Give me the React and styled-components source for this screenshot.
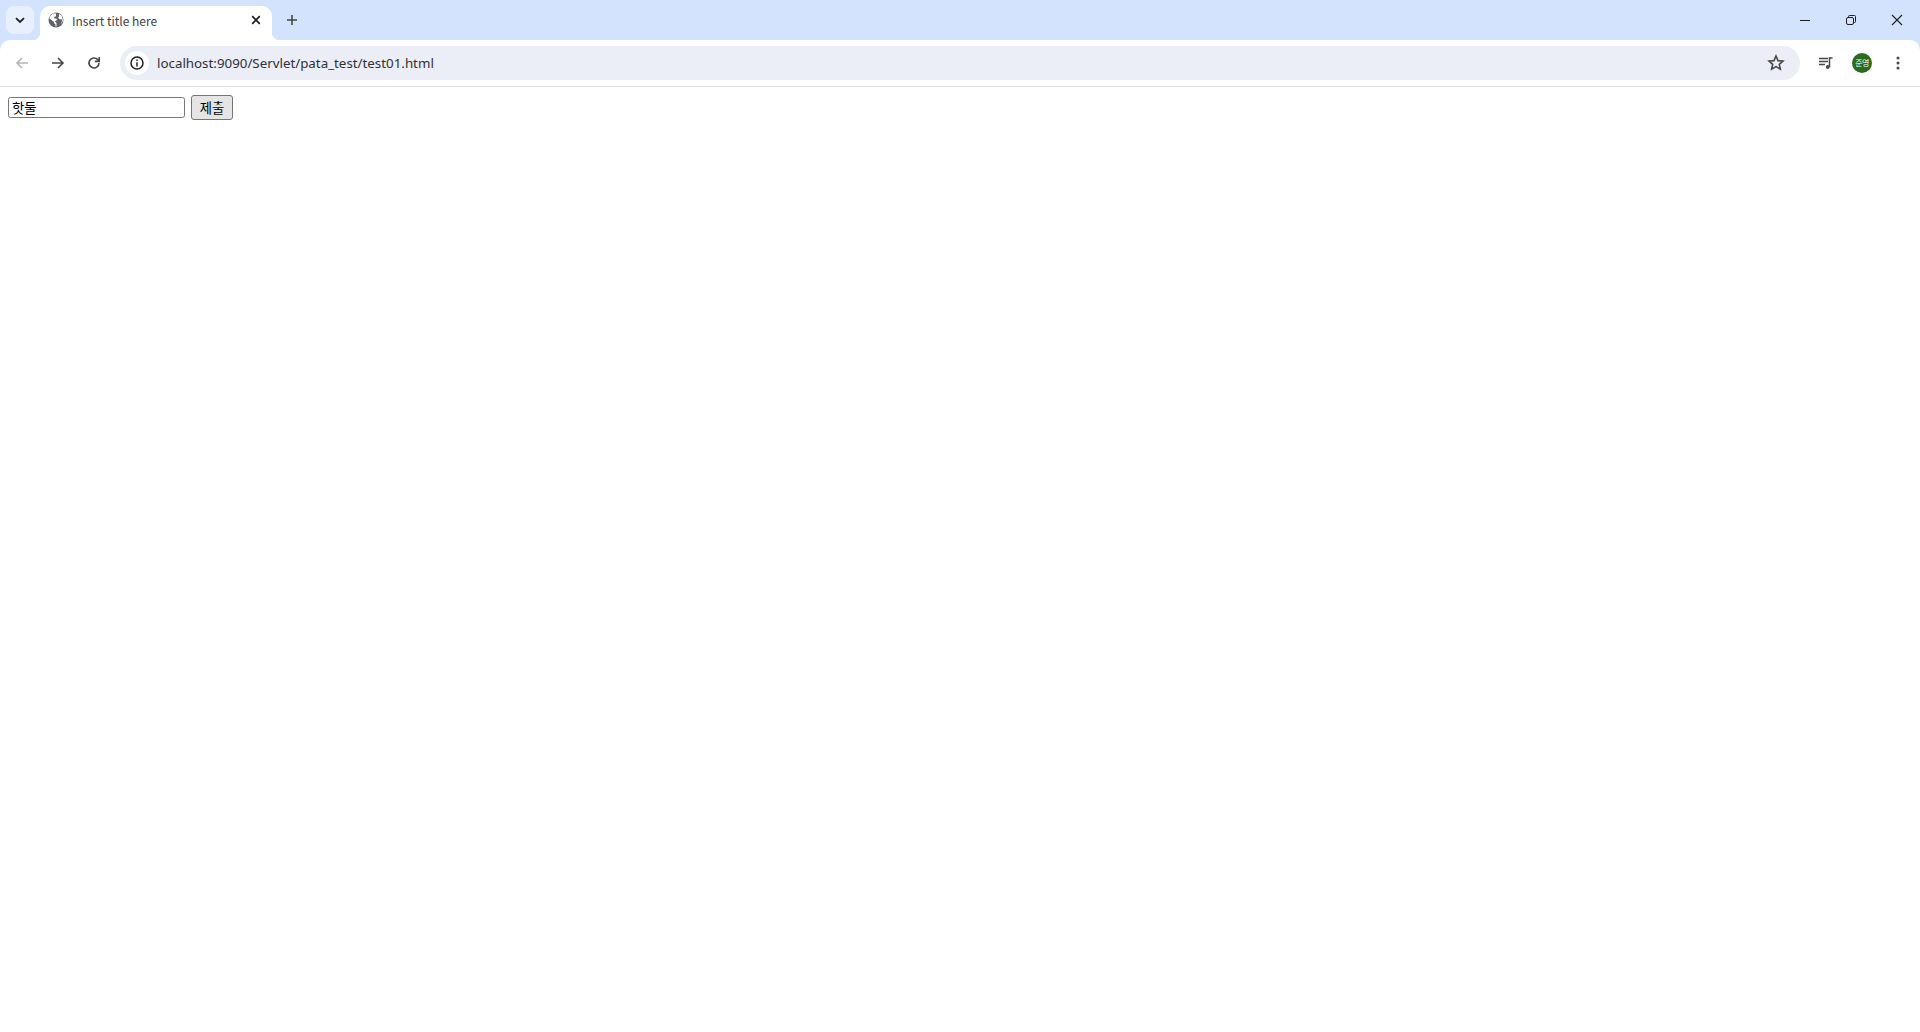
import React from "react";
import styled, { createGlobalStyle } from "styled-components";

const GlobalStyle = createGlobalStyle`
  html, body {
    margin: 0;
    padding: 0;
    background: #fff;
    height: 100%;
    overflow: hidden;
  }
`;

const Page = styled.div`
  width: 1920px;
  height: 1032px;
  display: flex;
  flex-direction: column;
  font-family: "Noto Sans CJK KR", "Liberation Sans", sans-serif;
`;

const BrowserFrame = styled.header`
  flex: none;
  background: #d3e3fd;
`;

const TabStrip = styled.div`
  height: 40px;
  display: flex;
  align-items: flex-start;
  padding-left: 6px;
`;

const TabSearch = styled.div`
  width: 28px;
  height: 28px;
  margin-top: 6px;
  border-radius: 8px;
  background: #e9f0fd;
  display: flex;
  align-items: center;
  justify-content: center;
`;

const Tab = styled.div`
  position: relative;
  width: 232px;
  height: 34px;
  margin: 6px 0 0 6px;
  background: #fff;
  border-radius: 10px 10px 0 0;
  display: flex;
  align-items: center;
  padding: 0 8px 6px 8px;
  box-sizing: border-box;

  &::before,
  &::after {
    content: "";
    position: absolute;
    bottom: 0;
    width: 8px;
    height: 8px;
    background: radial-gradient(circle at var(--cx) 0, #d3e3fd 8px, #fff 8.5px);
  }
  &::before {
    --cx: 0;
    left: -8px;
  }
  &::after {
    --cx: 100%;
    right: -8px;
  }
`;

const TabTitle = styled.span`
  flex: 1;
  margin: 2px 0 0 8px;
  font-family: "Noto Sans CJK KR", "Liberation Sans", sans-serif;
  font-size: 12px;
  line-height: 16px;
  color: #3c4043;
  white-space: nowrap;
`;

const NewTab = styled.div`
  width: 28px;
  height: 28px;
  margin: 6px 0 0 6px;
  display: flex;
  align-items: center;
  justify-content: center;
`;

const Spacer = styled.div`
  flex: 1;
`;

const WindowControls = styled.div`
  display: flex;
`;

const WindowButton = styled.div`
  width: 46px;
  height: 40px;
  display: flex;
  align-items: center;
  justify-content: center;
`;

const Toolbar = styled.div`
  height: 46px;
  background: #fff;
  border-bottom: 1px solid #dfe1e5;
  border-radius: 10px 10px 0 0;
  display: flex;
  align-items: center;
  padding: 0 4px;
`;

const NavButton = styled.div`
  width: 36px;
  height: 36px;
  display: flex;
  align-items: center;
  justify-content: center;
`;

const Omnibox = styled.div`
  width: 1680px;
  height: 34px;
  margin: 0 8px;
  background: #ebeef7;
  border-radius: 17px;
  display: flex;
  align-items: center;
  padding: 0 15px 0 5px;
  box-sizing: border-box;
`;

const SiteInfo = styled.div`
  width: 24px;
  height: 24px;
  border-radius: 50%;
  background: #fff;
  display: flex;
  align-items: center;
  justify-content: center;
`;

const Url = styled.span`
  flex: 1;
  margin-left: 8px;
  font-family: "Noto Sans", "Liberation Sans", sans-serif;
  font-size: 13.33px;
  color: #303134;
`;

const Avatar = styled.div`
  width: 20px;
  height: 20px;
  border-radius: 50%;
  background: #2b6b1e;
  color: #fff;
  font-size: 8px;
  line-height: 20px;
  text-align: center;
  letter-spacing: -0.5px;
`;

const Content = styled.main`
  flex: 1;
  background: #fff;
  padding: 8px;
`;

const Form = styled.form`
  display: flex;
  align-items: center;
  gap: 6px;
`;

const TextInput = styled.input`
  width: 177px;
  height: 21px;
  box-sizing: border-box;
  padding: 1px 3px;
  margin: 0;
  border: 1px solid #767676;
  border-radius: 2.5px;
  background: #fff;
  font-family: "Noto Sans CJK KR", sans-serif;
  font-size: 13.33px;
  color: #000;
  outline: none;
`;

const SubmitButton = styled.button`
  width: 42px;
  height: 25px;
  box-sizing: border-box;
  padding: 0;
  margin: 0;
  border: 1px solid #767676;
  border-radius: 3px;
  background: #e5e5e5;
  font-family: "Noto Sans CJK KR", sans-serif;
  font-size: 13.33px;
  color: #000;
`;

const Ico = ({ size = 16, children, stroke = "#474747", width = 1.6 }) => (
  <svg width={size} height={size} viewBox="0 0 16 16" fill="none" stroke={stroke} strokeWidth={width}>
    {children}
  </svg>
);

export default function App() {
  return (
    <Page>
      <GlobalStyle />
      <BrowserFrame>
        <TabStrip>
          <TabSearch>
            <Ico size={16} stroke="#1f1f1f" width={1.8}>
              <path d="M4 6.2 8 10l4-3.8" />
            </Ico>
          </TabSearch>
          <Tab>
            <svg width="16" height="16" viewBox="0 0 16 16">
              <circle cx="8" cy="8" r="7.5" fill="#5f6368" />
              <path
                d="M1.5 6.5 6 10v1l1.5 1.5V14.5h1V11L6.8 9.5 9 8l-.5-1.5H6.5L6 5l2-.7V1.5L5 1.2 1.8 4.5zM11 2v2.7l-1 1 1.5 1.5h2.2l.5 1.5-1.5 3 1-.7L15 8.5 13.6 3.5z"
                fill="#fff"
              />
            </svg>
            <TabTitle>Insert title here</TabTitle>
            <Ico size={16} stroke="#1f1f1f" width={1.7}>
              <path d="M4.2 4.2l7.6 7.6M11.8 4.2l-7.6 7.6" />
            </Ico>
          </Tab>
          <NewTab>
            <Ico size={16} stroke="#474747" width={1.6}>
              <path d="M8 3v10M3 8h10" />
            </Ico>
          </NewTab>
          <Spacer />
          <WindowControls>
            <WindowButton>
              <Ico stroke="#1f1f1f" width={1}>
                <path d="M3 8.5h10" />
              </Ico>
            </WindowButton>
            <WindowButton>
              <Ico stroke="#1f1f1f" width={1}>
                <rect x="3.5" y="5.5" width="7" height="7" rx="1.5" />
                <path d="M5.5 5.5V4.5a1 1 0 0 1 1-1h5a1 1 0 0 1 1 1v5a1 1 0 0 1-1 1h-1" />
              </Ico>
            </WindowButton>
            <WindowButton>
              <Ico stroke="#1f1f1f" width={1.1}>
                <path d="M3 3l10 10M13 3L3 13" />
              </Ico>
            </WindowButton>
          </WindowControls>
        </TabStrip>
        <Toolbar>
          <NavButton>
            <Ico stroke="#b3b5b8">
              <path d="M14 8H3M8 3 3 8l5 5" />
            </Ico>
          </NavButton>
          <NavButton>
            <Ico>
              <path d="M2 8h11M8 3l5 5-5 5" />
            </Ico>
          </NavButton>
          <NavButton>
            <Ico>
              <path d="M13 8a5 5 0 1 1-1.5-3.6L13 6" />
              <path d="M13.2 2v4.4H8.8" />
            </Ico>
          </NavButton>
          <Omnibox>
            <SiteInfo>
              <Ico stroke="#1f1f1f" width={1.5}>
                <circle cx="8" cy="8" r="6" />
                <path d="M8 7.2V11.5M8 4.5v1.4" />
              </Ico>
            </SiteInfo>
            <Url>localhost:9090/Servlet/pata_test/test01.html</Url>
            <Ico size={18} stroke="#474747" width={1.4}>
              <path d="M8 1.8l1.8 4.1 4.4.4-3.3 2.9 1 4.3L8 11.2l-3.9 2.3 1-4.3-3.3-2.9 4.4-.4z" />
            </Ico>
          </Omnibox>
          <NavButton>
            <svg width="16" height="16" viewBox="0 0 16 16" fill="none" stroke="#474747" strokeWidth="1.3">
              <path d="M1 3.5h9M1 6.5h9M1 9.5h6" />
              <path d="M11.5 12V3h3" strokeWidth="1.5" />
              <circle cx="9.8" cy="12" r="1.9" fill="#474747" stroke="none" />
            </svg>
          </NavButton>
          <NavButton>
            <Avatar>준영</Avatar>
          </NavButton>
          <NavButton>
            <svg width="16" height="16" viewBox="0 0 16 16" fill="#474747">
              <circle cx="8" cy="3" r="1.5" />
              <circle cx="8" cy="8" r="1.5" />
              <circle cx="8" cy="13" r="1.5" />
            </svg>
          </NavButton>
        </Toolbar>
      </BrowserFrame>
      <Content>
        <Form onSubmit={(e) => e.preventDefault()}>
          <TextInput defaultValue="핫둘" />
          <SubmitButton type="submit">제출</SubmitButton>
        </Form>
      </Content>
    </Page>
  );
}
